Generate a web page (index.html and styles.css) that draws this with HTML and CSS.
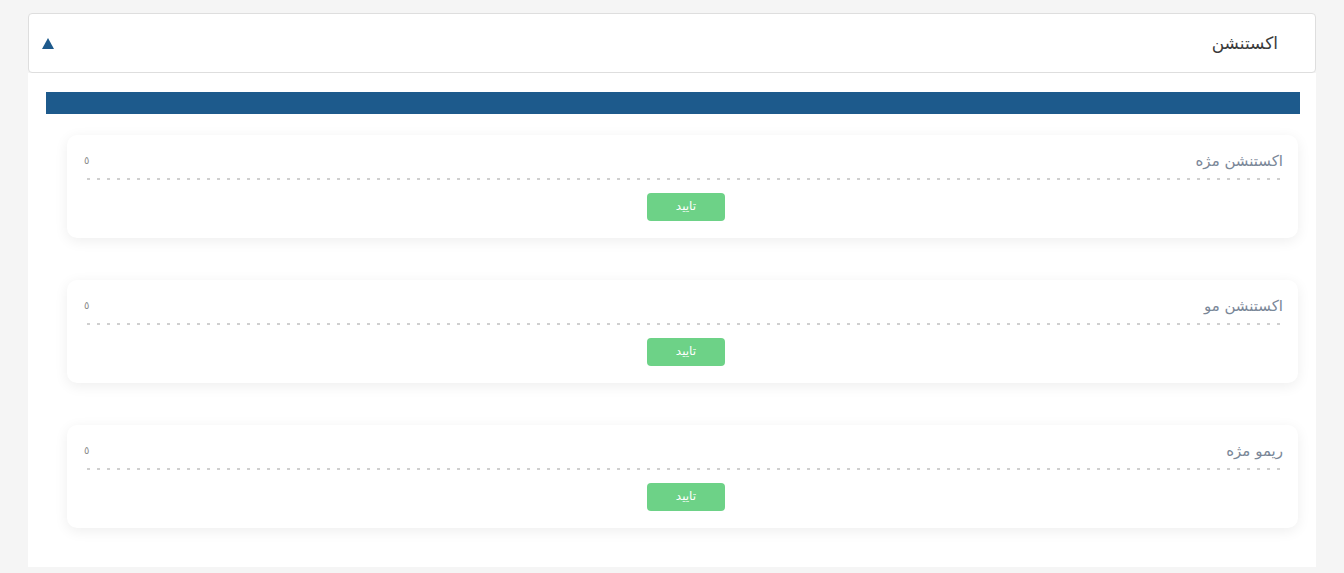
FILE: index.html
```html
<!DOCTYPE html>
<html lang="fa" dir="rtl">
<head>
    <meta charset="UTF-8">
    <title>اکستنشن</title>
    <link rel="stylesheet" href="styles.css">
</head>
<body>

<div class="accordion">
    <div class="accordion-head">
        <span class="accordion-title">اکستنشن</span>
        <span class="accordion-arrow"></span>
    </div>
    <div class="accordion-body">
        <div class="bar"></div>

        <div class="item-list">
            <div class="item-card">
                <div class="item-row">
                    <span class="item-name">اکستنشن مژه</span>
                    <span class="item-count">٥</span>
                </div>
                <div class="item-line"></div>
                <div class="item-actions">
                    <a class="btn-ok">تایید</a>
                </div>
            </div>

            <div class="item-card">
                <div class="item-row">
                    <span class="item-name">اکستنشن مو</span>
                    <span class="item-count">٥</span>
                </div>
                <div class="item-line"></div>
                <div class="item-actions">
                    <a class="btn-ok">تایید</a>
                </div>
            </div>

            <div class="item-card">
                <div class="item-row">
                    <span class="item-name">ریمو مژه</span>
                    <span class="item-count">٥</span>
                </div>
                <div class="item-line"></div>
                <div class="item-actions">
                    <a class="btn-ok">تایید</a>
                </div>
            </div>
        </div>
    </div>
</div>

</body>
</html>
```

FILE: styles.css
```css
body {
    margin: 0;
    padding: 13px 28px 6px;
    background: #f5f5f5;
    font-family: "DejaVu Sans", "Noto Sans", sans-serif;
}

.accordion-head {
    height: 58px;
    display: flex;
    align-items: center;
    justify-content: space-between;
    padding: 0 37px 0 13px;
    background: #fff;
    border: 1px solid #dedede;
    border-radius: 4px;
}

.accordion-title {
    font-size: 17px;
    color: #3a3a3a;
}

.accordion-arrow {
    width: 0;
    height: 0;
    border-left: 6px solid transparent;
    border-right: 6px solid transparent;
    border-bottom: 11px solid #1e5a8c;
}

.accordion-body {
    background: #fff;
    padding: 19px 16px 39px 18px;
}

.bar {
    height: 22px;
    background: #1d5a8c;
}

.item-list {
    display: flex;
    flex-direction: column;
    gap: 42px;
    padding: 21px 2px 0 21px;
}

.item-card {
    padding: 14px 15px 17px 17px;
    background: #fff;
    border-radius: 10px;
    box-shadow: 0 3px 14px rgba(0, 0, 0, 0.07);
}

.item-row {
    display: flex;
    justify-content: space-between;
    align-items: center;
    height: 24px;
}

.item-name {
    font-size: 15px;
    color: #7a8798;
}

.item-count {
    font-size: 10px;
    color: #888;
    margin-bottom: 2px;
}

.item-line {
    height: 2px;
    margin: 5px 1px 0 3px;
    background: repeating-linear-gradient(to right, #cfcfcf 0, #cfcfcf 3px, transparent 3px, transparent 10px);
}

.item-actions {
    display: flex;
    justify-content: center;
    margin-top: 13px;
    padding-left: 5px;
}

.btn-ok {
    width: 78px;
    height: 28px;
    line-height: 27px;
    text-align: center;
    background: #6dd287;
    color: #fff;
    font-size: 12px;
    border-radius: 4px;
    cursor: pointer;
}
```
